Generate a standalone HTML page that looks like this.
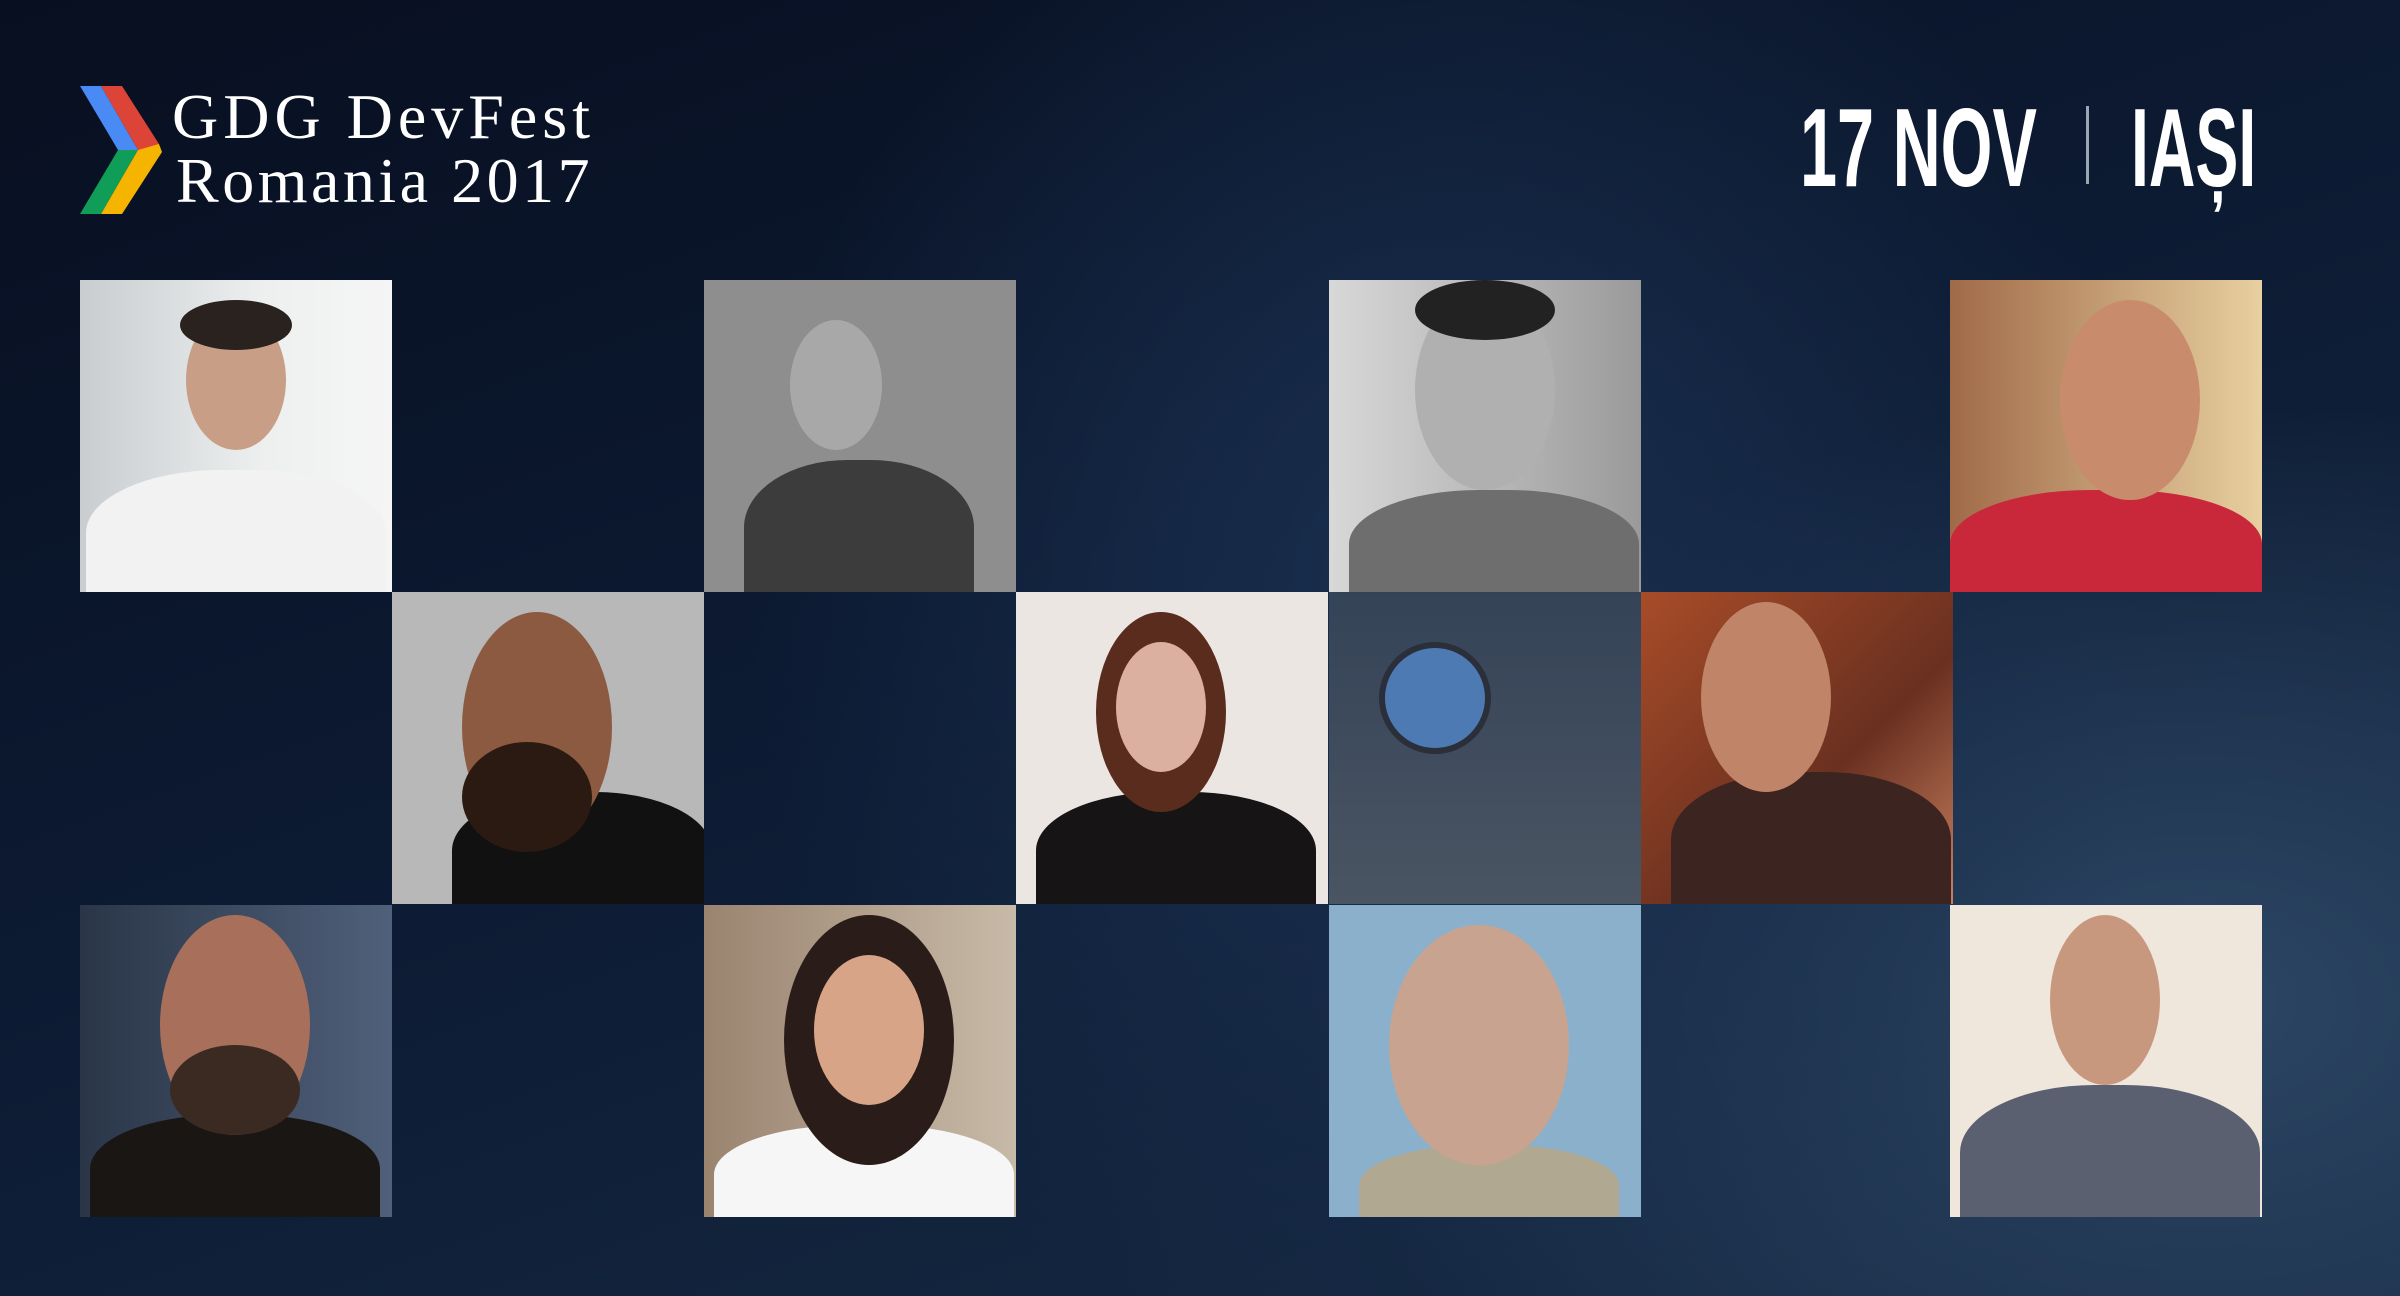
<!DOCTYPE html>
<html><head><meta charset="utf-8"><style>
*{margin:0;padding:0}
body{width:2400px;height:1296px;overflow:hidden;position:relative;
background:radial-gradient(ellipse 700px 800px at 1450px 600px,#1a3050 0%,rgba(20,40,65,0) 100%),
radial-gradient(ellipse 900px 600px at 2200px 1000px,#2c4664 0%,rgba(30,50,75,0) 100%),
linear-gradient(160deg,#080f20 0%,#0c1a32 45%,#182c46 100%);font-family:"Liberation Sans",sans-serif}
.t{position:absolute;width:312px;height:312px;overflow:hidden}
.t .h{position:absolute;border-radius:50%}
.t .b{position:absolute;border-radius:45% 45% 0 0}
.title{position:absolute;color:#fff;font-family:"Liberation Serif",serif;font-size:64px;white-space:nowrap}
.big{position:absolute;color:#fff;font-weight:bold;font-size:111px;line-height:1;transform-origin:0 0;white-space:nowrap}
</style></head><body>
<svg style="position:absolute;left:80px;top:86px" width="82" height="128" viewBox="0 0 82 128">
<polygon points="0,0 21,0 58,64 38,64" fill="#4a8af4"/>
<polygon points="21,0 42,0 79,58 76,68 58,64" fill="#db4437"/>
<polygon points="38,64 58,64 21,128 0,128" fill="#0f9d58"/>
<polygon points="58,64 79,58 82,66 42,128 21,128" fill="#f4b400"/>
</svg>
<div class="title" style="left:172px;top:80px;letter-spacing:5px">GDG DevFest</div>
<div class="title" style="left:176px;top:144px;letter-spacing:3.5px">Romania 2017</div>
<div class="big" style="left:1800px;top:93px;transform:scaleX(0.6)">17 NOV</div>
<div style="position:absolute;left:2086px;top:106px;width:3px;height:78px;background:#9aa6b4"></div>
<div class="big" style="left:2131px;top:93px;transform:scaleX(0.58)">IAȘI</div>

<div class="t" style="left:80px;top:280px;background:linear-gradient(90deg,#c9cdd0,#eef0f0 60%,#f5f5f5)"><div class="b" style="left:6px;top:190px;width:300px;height:140px;background:#f2f2f2"></div><div class="h" style="left:106px;top:30px;width:100px;height:140px;background:#c99e86"></div><div class="h" style="left:100px;top:20px;width:112px;height:50px;background:#2a221e"></div></div>
<div class="t" style="left:704px;top:280px;background:#8e8e8e"><div class="b" style="left:40px;top:180px;width:230px;height:150px;background:#3c3c3c"></div><div class="h" style="left:86px;top:40px;width:92px;height:130px;background:#a8a8a8"></div></div>
<div class="t" style="left:1329px;top:280px;background:linear-gradient(90deg,#d8d8d8,#9a9a9a)"><div class="b" style="left:20px;top:210px;width:290px;height:120px;background:#6e6e6e"></div><div class="h" style="left:86px;top:10px;width:140px;height:200px;background:#b0b0b0"></div><div class="h" style="left:86px;top:0;width:140px;height:60px;background:#222"></div></div>
<div class="t" style="left:1950px;top:280px;background:linear-gradient(90deg,#a06a48,#e8d0a0)"><div class="b" style="left:0;top:210px;width:312px;height:120px;background:#c8283a"></div><div class="h" style="left:110px;top:20px;width:140px;height:200px;background:#c88c6c"></div></div>
<div class="t" style="left:392px;top:592px;background:#b8b8b8"><div class="b" style="left:60px;top:200px;width:260px;height:130px;background:#111"></div><div class="h" style="left:70px;top:20px;width:150px;height:230px;background:#8c5a40"></div><div class="h" style="left:70px;top:150px;width:130px;height:110px;background:#2a1a12"></div></div>
<div class="t" style="left:1016px;top:592px;background:#ece6e2"><div class="b" style="left:20px;top:200px;width:280px;height:130px;background:#161414"></div><div class="h" style="left:80px;top:20px;width:130px;height:200px;background:#5a2c1e"></div><div class="h" style="left:100px;top:50px;width:90px;height:130px;background:#dcb0a0"></div></div>
<div class="t" style="left:1329px;top:592px;background:linear-gradient(180deg,#354358,#4a5562)"><div class="h" style="left:50px;top:50px;width:100px;height:100px;background:#4e7ab4;border:6px solid #2a2f3a"></div></div>
<div class="t" style="left:1641px;top:592px;background:linear-gradient(135deg,#a84c28,#6a3020 60%,#c88060)"><div class="b" style="left:30px;top:180px;width:280px;height:150px;background:#3c2420"></div><div class="h" style="left:60px;top:10px;width:130px;height:190px;background:#c08468"></div></div>
<div class="t" style="left:80px;top:905px;background:linear-gradient(90deg,#2a3648,#50607a)"><div class="b" style="left:10px;top:210px;width:290px;height:120px;background:#1a1614"></div><div class="h" style="left:80px;top:10px;width:150px;height:220px;background:#a8705a"></div><div class="h" style="left:90px;top:140px;width:130px;height:90px;background:#3a2a22"></div></div>
<div class="t" style="left:704px;top:905px;background:linear-gradient(90deg,#9a8470,#c8baa8)"><div class="b" style="left:10px;top:220px;width:300px;height:110px;background:#f6f6f6"></div><div class="h" style="left:80px;top:10px;width:170px;height:250px;background:#2a1c18"></div><div class="h" style="left:110px;top:50px;width:110px;height:150px;background:#d8a488"></div></div>
<div class="t" style="left:1329px;top:905px;background:#8ab0cc"><div class="b" style="left:30px;top:240px;width:260px;height:90px;background:#b0a890"></div><div class="h" style="left:60px;top:20px;width:180px;height:240px;background:#c8a490"></div></div>
<div class="t" style="left:1950px;top:905px;background:#efe6dc"><div class="b" style="left:10px;top:180px;width:300px;height:150px;background:#5a6070"></div><div class="h" style="left:100px;top:10px;width:110px;height:170px;background:#c8987e"></div></div>
</body></html>
